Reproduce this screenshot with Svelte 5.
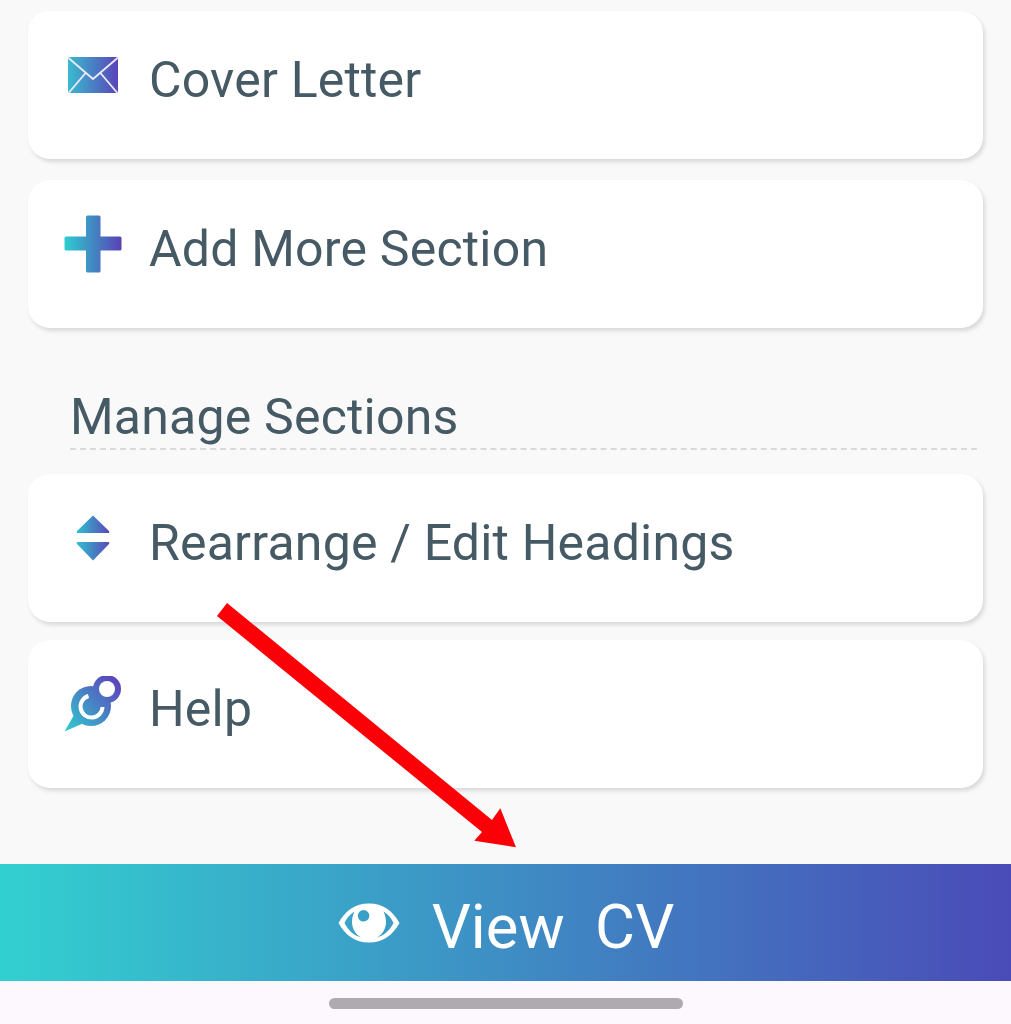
<script>
  const sections = [
    { label: 'Cover Letter', icon: 'mail' },
    { label: 'Add More Section', icon: 'plus' }
  ];
  const manage = [
    { label: 'Rearrange / Edit Headings', icon: 'sort' },
    { label: 'Help', icon: 'help' }
  ];
</script>

{#snippet icon(name)}
  {#if name === 'mail'}
    <svg width="50" height="36" viewBox="0 0 50 36">
      <defs><linearGradient id="gm" x1="0" x2="1" y1="0" y2="0"><stop offset="0" stop-color="#38bccf"/><stop offset="1" stop-color="#5a44b8"/></linearGradient></defs>
      <rect width="50" height="36" rx="2" fill="url(#gm)"/>
      <path d="M0.5 1 L25 22 L49.5 1 M18 15.5 L1 35.5 M32 15.5 L49 35.5" fill="none" stroke="#eeeafa" stroke-width="1.8"/>
    </svg>
  {:else if name === 'plus'}
    <svg width="58" height="58" viewBox="0 0 58 58">
      <defs><linearGradient id="gp" gradientUnits="userSpaceOnUse" x1="0" x2="58" y1="0" y2="0"><stop offset="0" stop-color="#2bcfd0"/><stop offset="1" stop-color="#5a3fb5"/></linearGradient></defs>
      <path d="M23.5 0.5 H35 a1.5 1.5 0 0 1 1.5 1.5 V21.5 H56 a1.5 1.5 0 0 1 1.5 1.5 V34 a1.5 1.5 0 0 1 -1.5 1.5 H36.5 V56 a1.5 1.5 0 0 1 -1.5 1.5 H23.5 a1.5 1.5 0 0 1 -1.5 -1.5 V35.5 H2 a1.5 1.5 0 0 1 -1.5 -1.5 V23 a1.5 1.5 0 0 1 1.5 -1.5 H22 V2 a1.5 1.5 0 0 1 1.5 -1.5 Z" fill="url(#gp)"/>
    </svg>
  {:else if name === 'sort'}
    <svg width="34" height="46" viewBox="0 0 34 46">
      <defs><linearGradient id="gs" x1="0" x2="1" y1="0" y2="0"><stop offset="0" stop-color="#2fc0cf"/><stop offset="1" stop-color="#5a48b8"/></linearGradient></defs>
      <path d="M17 0.5 L33 16 Q34 18 32 18 H2 Q0 18 1 16 Z M2 27 H32 Q34 27 33 29 L17 45.5 L1 29 Q0 27 2 27 Z" fill="url(#gs)"/>
    </svg>
  {:else}
    <svg width="58" height="56" viewBox="0 0 58 56">
      <defs><linearGradient id="gh" gradientUnits="userSpaceOnUse" x1="0" x2="58" y1="56" y2="0"><stop offset="0" stop-color="#2fd0cf"/><stop offset="0.55" stop-color="#4a7cc4"/><stop offset="1" stop-color="#6038b8"/></linearGradient></defs>
      <circle cx="27" cy="30" r="20" fill="url(#gh)"/>
      <circle cx="43" cy="13" r="14" fill="url(#gh)"/>
      <path d="M0.5 55.5 L10 39 L20 47 Z" fill="url(#gh)"/>
      <path d="M33 17 L45 28 L40 30 L30 22 Z" fill="url(#gh)"/>
      <circle cx="43" cy="13" r="8" fill="#fff"/>
      <path d="M24.5 20 A11 11 0 1 0 38.5 31" fill="none" stroke="#fff" stroke-width="4"/>
    </svg>
  {/if}
{/snippet}

{#snippet card(item)}
  <div class="card">
    <span class="slot">{@render icon(item.icon)}</span>
    <span class="label">{item.label}</span>
  </div>
{/snippet}

<div class="screen">
  <div class="content">
    <div class="group top">
      {#each sections as item}{@render card(item)}{/each}
    </div>
    <div class="heading">Manage Sections</div>
    <div class="group">
      {#each manage as item}{@render card(item)}{/each}
    </div>
  </div>

  <button class="view">
    <svg width="62" height="40" viewBox="0 0 62 40">
      <path fill="#fff" fill-rule="evenodd" d="M31 0.5 C45 0.5 55 8 61.5 20 C55 32 45 39.5 31 39.5 C17 39.5 7 32 0.5 20 C7 8 17 0.5 31 0.5 Z M16.5 8.5 C11.5 11.5 8.5 15.5 6.5 20 C10 27 16 32.5 23 34.5 C17 31 14 25 14 19 C14 15.5 15 11.5 16.5 8.5 Z M45.5 8.5 C47 11.5 48 15.5 48 19 C48 25 45 31 39 34.5 C46 32.5 52 27 55.5 20 C53.5 15.5 50.5 11.5 45.5 8.5 Z M25.5 7 A5.8 5.8 0 1 0 25.6 18.6 A5.8 5.8 0 1 0 25.5 7 Z"/>
    </svg>
    <span class="view-label">View&nbsp;&nbsp;CV</span>
  </button>

  <div class="nav"><span class="pill"></span></div>

  <svg class="arrow" width="1011" height="1024" viewBox="0 0 1011 1024">
    <path fill="#fb0007" d="M227 603 L492 820 L500.3 808.3 L516 847.3 L474.3 840.7 L482 832 L217 616 Z"/>
  </svg>
</div>

<style>
  :global(body) { margin: 0; background: #f9f9f9; }
  .screen {
    position: relative;
    width: 1011px;
    height: 1024px;
    overflow: hidden;
    display: flex;
    flex-direction: column;
    background: #f9f9f9;
    font-family: Roboto, "Noto Sans", sans-serif;
    color: #455a64;
  }
  .content {
    flex: 1;
    display: flex;
    flex-direction: column;
    padding: 11px 28px 0;
  }
  .group { display: flex; flex-direction: column; gap: 18px; }
  .group.top { gap: 21px; }
  .card {
    display: flex;
    align-items: center;
    height: 148px;
    box-sizing: border-box;
    padding: 0 0 11px 36px;
    background: #fff;
    border-radius: 22px;
    box-shadow: 2px 3px 4px rgba(0, 0, 0, 0.13);
  }
  .slot {
    width: 58px;
    display: flex;
    justify-content: center;
    align-items: center;
    margin: 0 27px 10px 0;
  }
  .slot svg { display: block; }
  .label { font-size: 50px; line-height: 56px; letter-spacing: 0.2px; }
  .heading {
    margin: 61px 6px 24px 42px;
    padding: 0 0 3px 0;
    font-size: 50px;
    line-height: 56px;
    letter-spacing: 0.2px;
    border-bottom: 2px dashed #d9d9d9;
  }
  .view {
    height: 117px;
    flex: none;
    width: 100%;
    border: 0;
    padding: 0 0 0 1px;
    display: flex;
    align-items: center;
    justify-content: center;
    gap: 32px;
    color: #fff;
    font-family: inherit;
    font-size: 61.5px;
    background: linear-gradient(90deg, #32d0d0 0%, #4a4bb8 100%);
  }
  .view-label { padding-top: 8px; }
  .nav {
    height: 43px;
    flex: none;
    display: flex;
    justify-content: center;
    padding-top: 17px;
    box-sizing: border-box;
    background: #fdf8fe;
  }
  .pill { width: 354px; height: 11px; border-radius: 6px; background: #aeaab0; }
  .arrow { position: absolute; left: 0; top: 0; pointer-events: none; }
</style>
